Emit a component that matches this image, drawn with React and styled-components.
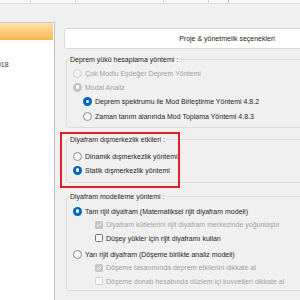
import React from "react";
import styled, { createGlobalStyle } from "styled-components";

const Global = createGlobalStyle`
  html, body { margin: 0; padding: 0; background: #f0f0f0; }
  body { font-family: "Liberation Sans", Arial, sans-serif; font-size: 7px; color: #1e1e1e; }
  * { box-sizing: border-box; }
`;

const Screen = styled.div`
  width: 300px;
  height: 300px;
  overflow: hidden;
  background: #f0f0f0;
  display: flex;
  flex-direction: column;
`;

const TopStrip = styled.div`
  height: 4px;
  flex: none;
  display: flex;
  background: #f9f9f9;
  border-bottom: 1px solid #dcdcdc;
`;

const Tab = styled.div`
  flex: none;
  width: ${(p) => p.$w}px;
  border-right: 1px solid ${(p) => (p.$active ? "#a9b6c4" : "#d6d6d6")};
`;

const Band = styled.div`
  height: 18px;
  flex: none;
`;

const Main = styled.div`
  flex: 1;
  display: flex;
  gap: 9px;
  min-height: 0;
`;

const LeftPanel = styled.div`
  width: 55px;
  flex: none;
  background: #ffffff;
  border-top: 1px solid #c9c9c9;
  border-right: 1px solid #c4c4c4;
  overflow: hidden;
  display: flex;
  flex-direction: column;
`;

const OrangeBar = styled.div`
  height: 17px;
  margin-right: 1px;
  background: linear-gradient(#fde3b0 0%, #fcd18a 35%, #fbc465 75%, #f8b54a 100%);
`;

const LeftItem = styled.div`
  margin-top: 20px;
  white-space: nowrap;
  color: #333;
  line-height: 9px;
  margin-left: -7px;
`;

const RightPanel = styled.div`
  position: relative;
  width: 340px;
  flex: none;
  padding-top: 6px;
  display: flex;
  flex-direction: column;
`;

const HeaderButton = styled.div`
  width: 326px;
  height: 21px;
  background: #ffffff;
  border: 1px solid #dadada;
  border-radius: 3px;
  display: flex;
  align-items: center;
  justify-content: center;
  color: #1e1e1e;
`;

const Group = styled.fieldset`
  margin: ${(p) => p.$mt}px 0 0 2px;
  padding: ${(p) => p.$pt}px 0 ${(p) => p.$pb}px 2px;
  border: 1px solid #dcdcdc;
  border-radius: 3px;
  min-width: 0;
`;

const Legend = styled.legend`
  padding: 0 1px;
  line-height: 9px;
  color: #1e1e1e;
`;

const Row = styled.div`
  display: flex;
  align-items: center;
  gap: 3px;
  height: ${(p) => p.$h || 14}px;
  margin-top: ${(p) => p.$mt || 0}px;
  padding-left: ${(p) => p.$indent}px;
  white-space: nowrap;
  color: ${(p) => (p.$disabled ? "#a2a2a2" : "#1e1e1e")};
`;

const RadioDot = styled.span`
  flex: none;
  width: 9px;
  height: 9px;
  border-radius: 50%;
  display: flex;
  align-items: center;
  justify-content: center;
  background: ${(p) =>
    p.$checked ? (p.$disabled ? "#c3c3c3" : "#0067c0") : p.$disabled ? "#f3f3f3" : "#f8f8f8"};
  border: ${(p) =>
    p.$checked ? "none" : p.$disabled ? "1px solid #cfcfcf" : "1px solid #8a8a8a"};
  &::after {
    content: "";
    display: ${(p) => (p.$checked ? "block" : "none")};
    width: 3.5px;
    height: 3.5px;
    border-radius: 50%;
    background: #ffffff;
  }
`;

const CheckBox = styled.span`
  flex: none;
  width: 8px;
  height: 8px;
  border-radius: 1.5px;
  display: flex;
  align-items: center;
  justify-content: center;
  background: ${(p) => (p.$checked ? "#c6c6c6" : "#fbfbfb")};
  border: ${(p) =>
    p.$checked ? "none" : p.$disabled ? "1px solid #d0d0d0" : "1px solid #6e6e6e"};
`;

const Highlight = styled.div`
  position: absolute;
  left: -4px;
  top: 110px;
  width: 120px;
  height: 56px;
  border: 2px solid #e41f2a;
  pointer-events: none;
`;

const Radio = ({ checked, disabled, indent = 4, h, mt, children }) => (
  <Row $indent={indent} $disabled={disabled} $h={h} $mt={mt}>
    <RadioDot $checked={checked} $disabled={disabled} />
    <span>{children}</span>
  </Row>
);

const Check = ({ checked, disabled, indent = 26, h, mt, children }) => (
  <Row $indent={indent} $disabled={disabled} $h={h} $mt={mt}>
    <CheckBox $checked={checked} $disabled={disabled}>
      {checked && (
        <svg width="6" height="6" viewBox="0 0 6 6">
          <path d="M1 3.1 L2.4 4.5 L5 1.5" fill="none" stroke="#fff" strokeWidth="1" />
        </svg>
      )}
    </CheckBox>
    <span>{children}</span>
  </Row>
);

export default function App() {
  return (
    <>
      <Global />
      <Screen>
        <TopStrip>
          <Tab $w={31} />
          <Tab $w={45} />
          <Tab $w={88} />
          <Tab $w={45} />
          <Tab $w={20} $active />
        </TopStrip>
        <Band />
        <Main>
          <LeftPanel>
            <OrangeBar />
            <LeftItem>2018</LeftItem>
          </LeftPanel>
          <RightPanel>
            <HeaderButton>Proje &amp; yönetmelik seçenekleri</HeaderButton>
            <Group $mt={6} $pt={2} $pb={3}>
              <Legend>Deprem yükü hesaplama yöntemi :</Legend>
              <Radio disabled>Çok Modlu Eşdeğer Deprem Yöntemi</Radio>
              <Radio disabled checked>Modal Analiz</Radio>
              <Radio checked indent={14} h={15}>Deprem spektrumu ile Mod Birleştirme Yöntemi 4.8.2</Radio>
              <Radio indent={14} h={15}>Zaman tanım alanında Mod Toplama Yöntemi 4.8.3</Radio>
            </Group>
            <Group $mt={7} $pt={5} $pb={5}>
              <Legend>Diyafram dışmerkezlik etkileri :</Legend>
              <Radio>Dinamik dışmerkezlik yöntemi</Radio>
              <Radio checked>Statik dışmerkezlik yöntemi</Radio>
            </Group>
            <Group $mt={9} $pt={3} $pb={2}>
              <Legend>Diyafram modelleme yöntemi :</Legend>
              <Radio checked>Tam rijit diyafram (Matematiksel rijit diyafram modeli)</Radio>
              <Check checked disabled h={13.5}>Diyafram kütlelerini rijit diyafram merkezinde yoğunlaştır</Check>
              <Check h={13.5}>Düşey yükler için rijit diyaframı kullan</Check>
              <Radio mt={2}>Yarı rijit diyafram (Döşeme birlikte analiz modeli)</Radio>
              <Check checked disabled h={13.5}>Döşeme tasarımında deprem etkilerini dikkate al</Check>
              <Check disabled h={13.5}>Döşeme donatı hesabında düzlem içi kuvvetleri dikkate al</Check>
            </Group>
            <Highlight />
          </RightPanel>
        </Main>
      </Screen>
    </>
  );
}
